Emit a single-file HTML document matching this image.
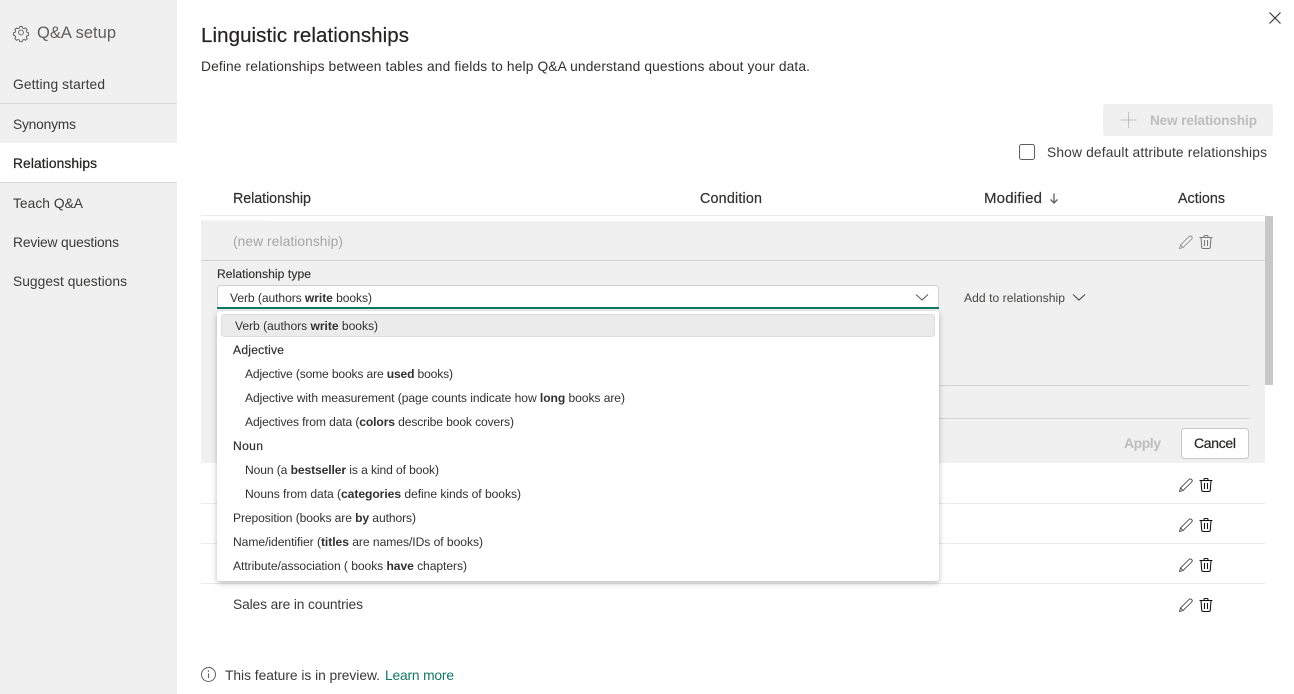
<!DOCTYPE html>
<html lang="en"><head><meta charset="utf-8"><title>Q&amp;A setup</title>
<style>
html,body{margin:0;padding:0;background:#fff;width:1294px;height:694px;overflow:hidden}
svg{display:block}
text{font-family:"Liberation Sans",sans-serif;font-size:13.8px;fill:#3b3a39}
.s{font-size:12.100px;fill:#323130}
.b{font-weight:700}
.hd{fill:#323130;stroke:#323130;stroke-width:.2;font-size:14.300px}
</style></head><body>
<svg width="1294" height="694" viewBox="0 0 1294 694" xmlns="http://www.w3.org/2000/svg">
<defs>
<filter id="sh" x="-5%" y="-10%" width="110%" height="120%"><feDropShadow dx="0" dy="2" stdDeviation="3" flood-color="#000" flood-opacity=".28"/></filter>
<g id="pen" fill="none" stroke-width=".85"><path d="M-6.500 6.500l1-3.500L3 -5.500c.8-.8 2-.8 2.700 0s.7 1.800 0 2.500L-3 5.500zM-5.500 3l2.500 2.500"/></g>
<g id="tr" fill="none" stroke-width="1.050"><path d="M-6.500 -4.500h13M-2 -4.500v-1q0-1 1-1h2q1 0 1 1v1M-5 -4.500l.7 9.500q.1 1.500 1.500 1.500h5.600q1.400 0 1.500-1.500l.7-9.500M-1.500 -2v6M1.500 -2v6"/></g>
</defs>

<!-- sidebar -->
<rect x="0" y="0" width="177" height="694" fill="#f0f0f0"/>
<rect x="0" y="143" width="177" height="39" fill="#fff"/>
<rect x="0" y="103" width="177" height="1" fill="#d8d8d8"/>
<rect x="0" y="182" width="177" height="1" fill="#d8d8d8"/>
<g transform="translate(21 32.500) scale(.8)" fill="none" stroke="#605e5c" stroke-width="1.150">
<circle r="3"/>
<path d="M-1.500 -7.500h3l.5 2 1.800 .8 1.800-1 2.100 2.100-1 1.800 .8 1.800 2 .5v3l-2 .5-.8 1.800 1 1.800-2.100 2.100-1.800-1-1.800 .8-.5 2h-3l-.5-2-1.800-.8-1.800 1-2.100-2.100 1-1.800-.8-1.800-2-.5v-3l2-.5 .8-1.800-1-1.800 2.100-2.100 1.800 1 1.800-.8z"/>
</g>
<text x="37" y="38" textLength="79" style="font-size:16.500px;fill:#605e5c">Q&amp;A setup</text>
<text x="13" y="89" textLength="92">Getting started</text>
<text x="13" y="129" textLength="63">Synonyms</text>
<text x="13" y="168" textLength="84" style="fill:#252423;stroke:#252423;stroke-width:.25">Relationships</text>
<text x="13" y="208" textLength="70">Teach Q&amp;A</text>
<text x="13" y="247" textLength="106">Review questions</text>
<text x="13" y="286" textLength="114">Suggest questions</text>

<!-- header -->
<text x="201" y="42" textLength="208" style="font-size:20.500px;fill:#252423;stroke:#252423;stroke-width:.2">Linguistic relationships</text>
<text x="201" y="71" textLength="609" style="font-size:13.800px;fill:#323130">Define relationships between tables and fields to help Q&amp;A understand questions about your data.</text>
<path d="M1269.500 12.500l11 11M1280.500 12.500l-11 11" stroke="#323130" stroke-width="1.100" fill="none"/>

<rect x="1103" y="104" width="170" height="32" rx="3" fill="#f0f0f0"/>
<path d="M1128.500 112v16M1120.500 120h16" stroke="#c2c2c2" stroke-width="1" fill="none"/>
<text x="1150" y="125" textLength="107" class="b" style="font-size:13.500px;fill:#bdbdbd">New relationship</text>
<rect x="1019.500" y="144.500" width="15" height="15" rx="2" fill="#fff" stroke="#605e5c"/>
<text x="1047" y="157" textLength="220">Show default attribute relationships</text>

<text x="233" y="203" textLength="78" class="hd">Relationship</text>
<text x="700" y="203" textLength="62" class="hd">Condition</text>
<text x="984" y="203" textLength="58" class="hd" style="font-size:15px">Modified</text>
<path d="M1054 193.500v9M1050.500 199.500l3.500 3.500 3.500-3.500" fill="none" stroke="#605e5c" stroke-width="1.300"/>
<text x="1178" y="203" textLength="47" class="hd">Actions</text>
<rect x="201" y="215" width="1064" height="1" fill="#edebe9"/>

<!-- expanded panel -->
<rect x="201" y="221" width="1064" height="242" fill="#f0f0f0"/>
<rect x="201" y="220" width="64" height="1" fill="#f4f4f4"/>
<rect x="201" y="260" width="1064" height="1" fill="#d2d2d2"/>
<rect x="1265" y="216" width="8" height="169" fill="#c8c8c8"/>
<rect x="217" y="385" width="1032" height="1" fill="#d2d2d2"/>
<rect x="217" y="418" width="1032" height="1" fill="#d2d2d2"/>
<text x="233" y="246" textLength="110" style="fill:#a6a6a6">(new relationship)</text>
<use href="#pen" x="1186" y="242" stroke="#8a8a8a"/>
<use href="#tr" x="1206" y="242" stroke="#7a7a7a"/>

<text x="217" y="278" textLength="94" class="s" style="stroke:#323130;stroke-width:.15">Relationship type</text>
<rect x="217.500" y="285.500" width="721" height="23" rx="3" fill="#fff" stroke="#cfcfcf"/>
<rect x="217" y="307" width="722" height="2" fill="#117865"/>
<text x="230" y="302" textLength="142" class="s">Verb (authors <tspan class="b">write</tspan> books)</text>
<path d="M916 294.500l6 5.500 6-5.500" fill="none" stroke="#605e5c" stroke-width="1.100"/>
<text x="964" y="302" textLength="101" class="s" style="fill:#484644">Add to relationship</text>
<path d="M1073 294.500l6 5.500 6-5.500" fill="none" stroke="#484644" stroke-width="1.100"/>

<text x="1124" y="448" textLength="37" class="b" style="font-size:14px;fill:#bdbdbd">Apply</text>
<rect x="1181.500" y="428.500" width="67" height="30" rx="3" fill="#fff" stroke="#c8c8c8"/>
<text x="1194" y="448" textLength="42" style="font-size:14px;fill:#252423;stroke:#252423;stroke-width:.2">Cancel</text>

<!-- rows -->
<rect x="201" y="503" width="1064" height="1" fill="#edebe9"/>
<rect x="201" y="543" width="1064" height="1" fill="#edebe9"/>
<rect x="201" y="583" width="1064" height="1" fill="#edebe9"/>
<use href="#pen" x="1186" y="485" stroke="#3b3a39"/><use href="#tr" x="1206" y="485" stroke="#111"/>
<use href="#pen" x="1186" y="525" stroke="#3b3a39"/><use href="#tr" x="1206" y="525" stroke="#111"/>
<use href="#pen" x="1186" y="565" stroke="#3b3a39"/><use href="#tr" x="1206" y="565" stroke="#111"/>
<use href="#pen" x="1186" y="605" stroke="#3b3a39"/><use href="#tr" x="1206" y="605" stroke="#111"/>
<text x="233" y="609" textLength="130">Sales are in countries</text>

<!-- dropdown -->
<rect x="217" y="311" width="722" height="270" rx="3" fill="#fff" filter="url(#sh)"/>
<rect x="221.500" y="314.500" width="713" height="22" rx="3" fill="#ebebeb" stroke="#dedede"/>
<text x="235" y="330" textLength="143" class="s">Verb (authors <tspan class="b">write</tspan> books)</text>
<text x="233" y="354" textLength="51" class="s" style="stroke:#323130;stroke-width:.2">Adjective</text>
<text x="245" y="378" textLength="208" class="s">Adjective (some books are <tspan class="b">used</tspan> books)</text>
<text x="245" y="402" textLength="380" class="s">Adjective with measurement (page counts indicate how <tspan class="b">long</tspan> books are)</text>
<text x="245" y="426" textLength="269" class="s">Adjectives from data (<tspan class="b">colors</tspan> describe book covers)</text>
<text x="233" y="450" textLength="30" class="s" style="stroke:#323130;stroke-width:.2">Noun</text>
<text x="245" y="474" textLength="194" class="s">Noun (a <tspan class="b">bestseller</tspan> is a kind of book)</text>
<text x="245" y="498" textLength="276" class="s">Nouns from data (<tspan class="b">categories</tspan> define kinds of books)</text>
<text x="233" y="522" textLength="183" class="s">Preposition (books are <tspan class="b">by</tspan> authors)</text>
<text x="233" y="546" textLength="250" class="s">Name/identifier (<tspan class="b">titles</tspan> are names/IDs of books)</text>
<text x="233" y="570" textLength="234" class="s">Attribute/association ( books <tspan class="b">have</tspan> chapters)</text>

<!-- footer -->
<circle cx="208.500" cy="674.500" r="7" fill="none" stroke="#605e5c" stroke-width="1"/>
<path d="M208.500 673.500v4.500" stroke="#605e5c" stroke-width="1.100"/><circle cx="208.500" cy="671" r=".8" fill="#605e5c"/>
<text x="225" y="680" textLength="155">This feature is in preview.</text>
<text x="385" y="680" textLength="69" style="fill:#117865">Learn more</text>
</svg>
</body></html>
